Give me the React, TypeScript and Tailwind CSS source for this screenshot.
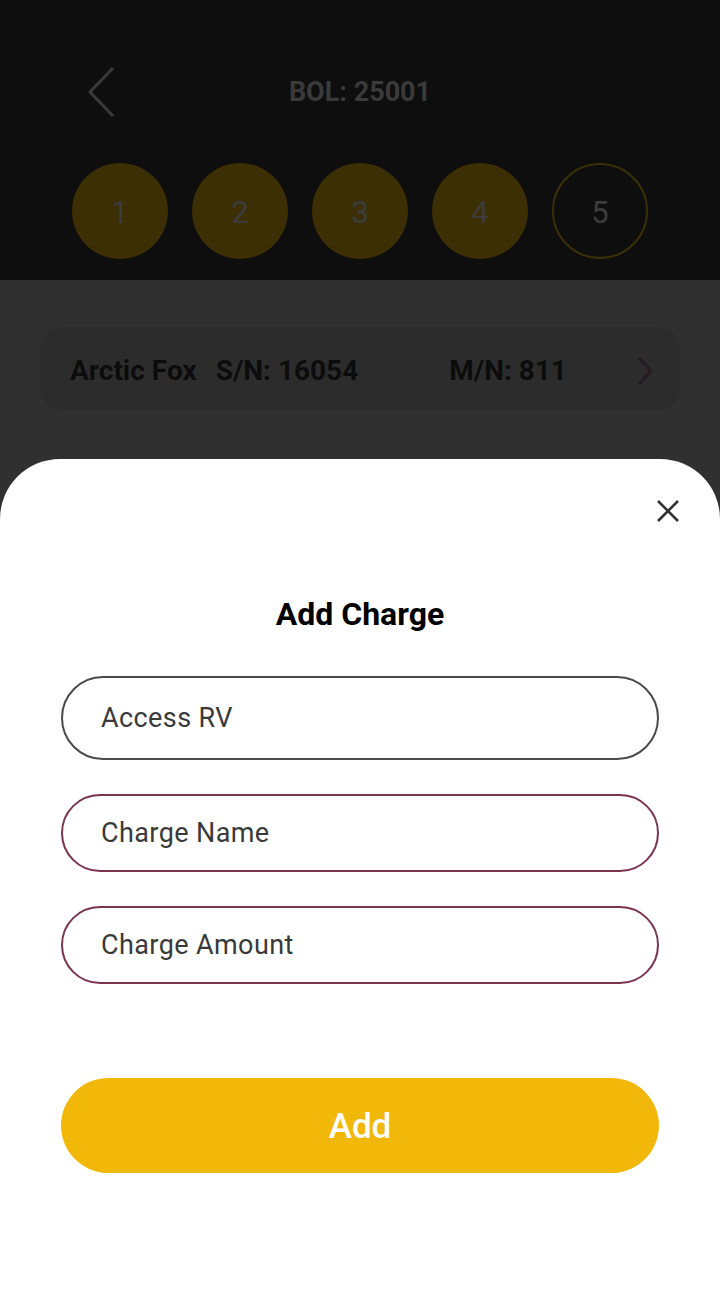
import { useState } from "react";

const steps = [1, 2, 3, 4, 5];

const Field = ({
  placeholder,
  tall,
  accent,
}: {
  placeholder: string;
  tall?: boolean;
  accent?: boolean;
}) => {
  const [value, setValue] = useState("");
  return (
    <input
      value={value}
      onChange={(e) => setValue(e.target.value)}
      placeholder={placeholder}
      className={
        "w-full rounded-full border-2 bg-white pl-[38px] text-[27px] tracking-[0.4px] text-[#333] placeholder:text-[#3a3a3a] outline-none " +
        (tall ? "h-[84px] " : "h-[78px] ") +
        (accent ? "border-[#7a3550]" : "border-[#4a4a4a]")
      }
    />
  );
};

export default function App() {
  return (
    <div
      className="w-[720px] h-[1307px] flex flex-col bg-[#303030] overflow-hidden"
      style={{ fontFamily: "Roboto, 'Noto Sans', sans-serif" }}
    >
      {/* dimmed header */}
      <div className="h-[280px] bg-[#0e0e0f] pt-[66px] flex flex-col">
        <div className="grid grid-cols-[1fr_auto_1fr] items-center h-[52px]">
          <div className="pl-[86px] flex items-center">
            <svg width="30" height="52" viewBox="0 0 30 52" fill="none">
              <path
                d="M27 2 L4 26 L27 50"
                stroke="#3a3a3a"
                strokeWidth="3"
                strokeLinejoin="round"
              />
            </svg>
          </div>
          <div className="text-[27px] font-bold text-[#3a3a3a]">
            BOL: 25001
          </div>
          <div />
        </div>
        <div className="flex justify-center gap-[24px] mt-[45px]">
          {steps.map((n) => (
            <div
              key={n}
              className={
                "w-[96px] h-[96px] rounded-full flex items-center justify-center pt-[4px] text-[31px] text-[#3c3c3c] " +
                (n < 5 ? "bg-[#3c2f04]" : "border-2 border-[#3a3006]")
              }
            >
              {n}
            </div>
          ))}
        </div>
      </div>

      {/* dimmed content */}
      <div className="h-[179px] px-[40px] pt-[47px]">
        <div className="h-[84px] rounded-[22px] bg-[#2c2c2c] flex items-center pl-[30px] pr-[26px] pt-[4px] text-[28px] font-bold text-[#0c0c0c]">
          <span>Arctic Fox</span>
          <span className="ml-[19px]">S/N: 16054</span>
          <span className="ml-[91px]">M/N: 811</span>
          <svg
            className="ml-auto"
            width="18"
            height="30"
            viewBox="0 0 18 30"
            fill="none"
          >
            <path d="M3 2 L15 15 L3 28" stroke="#241c20" strokeWidth="3" />
          </svg>
        </div>
      </div>

      {/* bottom sheet */}
      <div className="flex-1 bg-white rounded-t-[60px] flex flex-col px-[61px]">
        <div className="flex justify-end -mr-[21px] mt-[40px]">
          <svg width="24" height="24" viewBox="0 0 24 24" fill="none">
            <path
              d="M2 2 L22 22 M22 2 L2 22"
              stroke="#333"
              strokeWidth="2.6"
            />
          </svg>
        </div>
        <h2 className="mt-[72px] text-center text-[32px] font-bold text-black leading-[38px]">
          Add Charge
        </h2>
        <div className="mt-[43px] flex flex-col gap-[34px]">
          <Field placeholder="Access RV" tall />
        </div>
        <div className="mt-[34px] flex flex-col gap-[34px]">
          <Field placeholder="Charge Name" accent />
          <Field placeholder="Charge Amount" accent />
        </div>
        <button className="mt-[94px] h-[95px] rounded-full bg-[#f1b80a] pt-[4px] text-white text-[35px] font-medium">
          Add
        </button>
      </div>
    </div>
  );
}
